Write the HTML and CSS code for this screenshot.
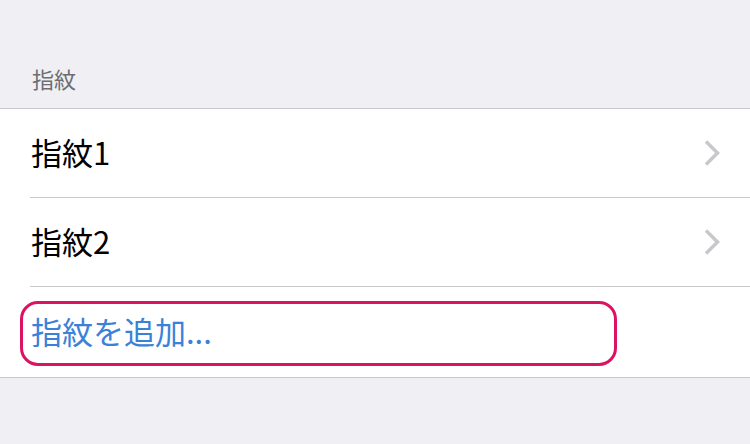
FILE: index.html
```html
<!DOCTYPE html>
<html lang="ja">
<head>
  <meta charset="UTF-8">
  <title>指紋</title>
  <link rel="stylesheet" href="styles.css">
</head>
<body>
  <div class="section-header">指紋</div>

  <div class="list">
    <div class="row">
      <div class="row-body">
        <span class="label">指紋1</span>
        <svg class="chevron" width="16" height="26" viewBox="0 0 16 26">
          <path d="M2 1.5 L13.5 13 L2 24.5" fill="none" stroke="#c7c7cc" stroke-width="3.5"/>
        </svg>
      </div>
    </div>
    <div class="row">
      <div class="row-body">
        <span class="label">指紋2</span>
        <svg class="chevron" width="16" height="26" viewBox="0 0 16 26">
          <path d="M2 1.5 L13.5 13 L2 24.5" fill="none" stroke="#c7c7cc" stroke-width="3.5"/>
        </svg>
      </div>
    </div>
    <div class="row add-row">
      <div class="row-body">
        <span class="label action">指紋を追加...</span>
      </div>
      <div class="highlight"></div>
    </div>
  </div>
</body>
</html>
```

FILE: styles.css
```css
body {
  font-family: "Noto Sans CJK JP", "Noto Sans", sans-serif;
  background: #efeff4;
  margin: 0;
  padding: 0;
}

.section-header {
  height: 108px;
  box-sizing: border-box;
  padding: 61px 32px 0;
  font-size: 22px;
  line-height: 34px;
  color: #6d6d72;
}

.list {
  background: #fff;
  border-top: 1px solid #c8c7cc;
  border-bottom: 1px solid #c8c7cc;
}

.row {
  padding-left: 30px;
}

.row-body {
  height: 89px;
  box-sizing: border-box;
  display: flex;
  align-items: center;
  justify-content: space-between;
  padding: 0 30px 3px 1px;
  border-bottom: 1px solid #c8c7cc;
}

.row:last-child .row-body {
  border-bottom: none;
  height: 90px;
}

.label {
  font-size: 31px;
  color: #000;
}

.chevron {
  margin-top: 3px;
}

.action {
  color: #3a82d8;
}

.add-row {
  position: relative;
}

.highlight {
  position: absolute;
  left: 20px;
  top: 14px;
  width: 597px;
  height: 65px;
  box-sizing: border-box;
  border: 3.5px solid #dc1262;
  border-radius: 18px;
}
```
